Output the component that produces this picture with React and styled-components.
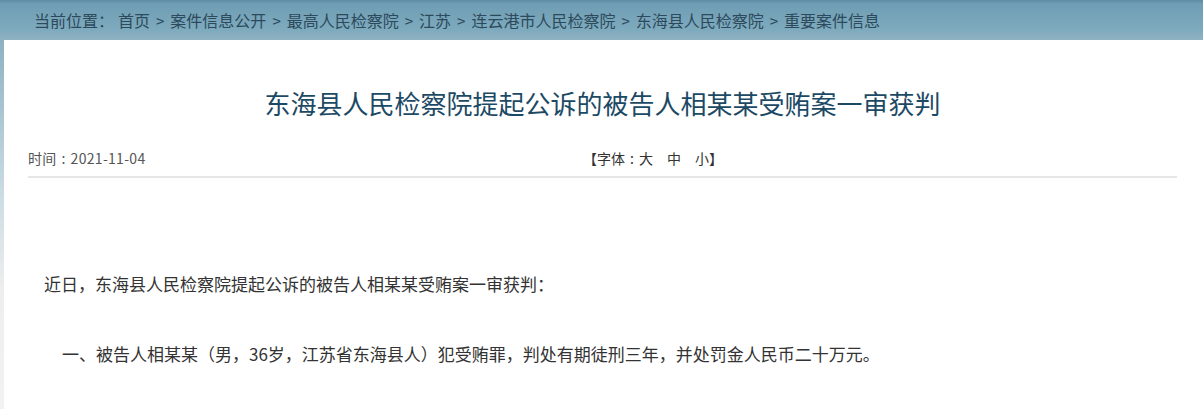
import React from 'react'
import styled, { createGlobalStyle } from 'styled-components'

const GlobalStyle = createGlobalStyle`
    html, body {
        margin: 0;
        padding: 0;
        background: #ffffff;
    }
    body {
        font-family: "Noto Sans CJK SC", "Noto Sans", sans-serif;
    }
`

const crumbs = [
    '首页',
    '案件信息公开',
    '最高人民检察院',
    '江苏',
    '连云港市人民检察院',
    '东海县人民检察院',
    '重要案件信息'
]

const paragraphs = [
    { indent: 16, text: '近日，东海县人民检察院提起公诉的被告人相某某受贿案一审获判：' },
    { indent: 34, text: '一、被告人相某某（男，36岁，江苏省东海县人）犯受贿罪，判处有期徒刑三年，并处罚金人民币二十万元。' }
]

function App() {
    return (
        <>
            <GlobalStyle />
            <Location>
                <span>当前位置：</span>
                <Crumbs>
                    {crumbs.map((c, i) => (
                        <React.Fragment key={c}>
                            {i > 0 && <Sep>&gt;</Sep>}
                            <Crumb>{c}</Crumb>
                        </React.Fragment>
                    ))}
                </Crumbs>
            </Location>

            <Frame>
                <Panel>
                    <Title>东海县人民检察院提起公诉的被告人相某某受贿案一审获判</Title>

                    <Meta>
                        <DateText>时间<Colon>:</Colon>2021-11-04</DateText>
                        <FontSizer>
                            【字体<Colon>:</Colon><SizeLink>大</SizeLink><SizeLink>中</SizeLink><SizeLink>小</SizeLink>】
                        </FontSizer>
                    </Meta>

                    <Article>
                        {paragraphs.map((p) => (
                            <Para key={p.text} indent={p.indent}>{p.text}</Para>
                        ))}
                    </Article>
                </Panel>
            </Frame>
        </>
    )
}

export default App

const Location = styled.div`
    height: 40px;
    display: flex;
    align-items: center;
    padding-left: 34px;
    font-size: 16px;
    color: #2c4a5b;
    background: linear-gradient(#5d8ba3 0px, #6f9db4 4px, #7eaabd 30px, #90b3c3 40px);
    white-space: nowrap;
`
const Crumbs = styled.span`
    margin-left: 4px;
`
const Crumb = styled.span`
`
const Sep = styled.span`
    margin: 0 6px;
    font-size: 15px;
`
const Frame = styled.div`
    padding-left: 4px;
    background: linear-gradient(#8eb1c1 0px, #c9dbe3 150px, #eeeeee 250px, #f2f2f2 100%);
    min-height: 369px;
    display: flex;
`
const Panel = styled.div`
    flex: 1;
    background: #ffffff;
    padding: 45px 26px 0 24px;
`
const Title = styled.h1`
    margin: 0;
    text-align: center;
    font-size: 26px;
    line-height: 36px;
    font-weight: normal;
    color: #1c4964;
`
const Meta = styled.div`
    margin-top: 27px;
    display: grid;
    grid-template-columns: 555px auto;
    font-size: 14px;
    line-height: 20px;
    color: #555555;
    padding-bottom: 8px;
    border-bottom: 2px solid #e6e6e6;
`
const DateText = styled.span`
    letter-spacing: 0.3px;
`
const Colon = styled.span`
    display: inline-block;
    width: 1em;
    text-align: center;
`
const FontSizer = styled.span`
    color: #333333;
`
const SizeLink = styled.span`
    margin-right: 14px;
    &:last-child {
        margin-right: 0;
    }
`
const Article = styled.div`
    padding-top: 91px;
`
const Para = styled.p`
    margin: 0 0 40px;
    font-size: 17px;
    line-height: 30px;
    color: #333333;
    text-indent: ${(p) => p.indent}px;
`
